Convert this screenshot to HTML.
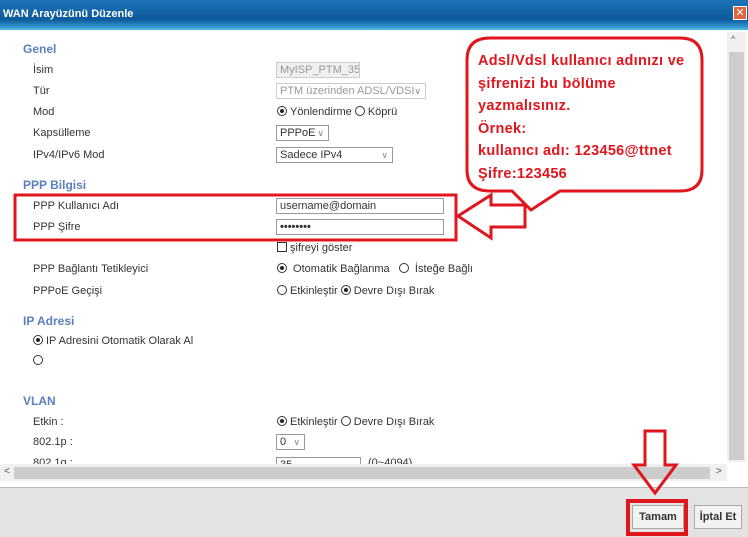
<!DOCTYPE html><html><head><meta charset="utf-8"><style>
*{margin:0;padding:0;box-sizing:border-box}
body{width:748px;height:537px;position:relative;overflow:hidden;background:#fff;font-family:"Liberation Sans",sans-serif;font-size:11px;color:#333}
.a{position:absolute;white-space:nowrap}
.h{color:#5b7fbf;font-weight:bold;font-size:12px}
.in{position:absolute;border:1px solid #999;background:#fff;height:16px;padding:1px 3px;font-size:11px;white-space:nowrap;overflow:hidden;line-height:12px}
.rd{display:inline-block;width:10px;height:10px;border:1px solid #333;border-radius:50%;vertical-align:-1px;margin-right:3px;position:relative}
.rd.on::after{content:"";position:absolute;left:2px;top:2px;width:4px;height:4px;border-radius:50%;background:#222}
.dd{position:absolute;right:4px;top:1px;color:#888;font-size:9px}
.r{color:#e0161e}
</style></head><body>
<div class="a" style="left:0;top:0;width:748px;height:30px;background:linear-gradient(#1f73b8,#0d5a9c 70%,#3aa0d8);border-bottom:2px solid #49b3df"></div>
<div class="a" style="left:3px;top:8px;color:#fff;font-weight:bold;font-size:11px">WAN Arayüzünü Düzenle</div>
<div class="a" style="left:733px;top:6px;width:14px;height:14px;background:#e2643c;border:1px solid #fff;color:#fff;font-size:11px;line-height:12px;text-align:center">✕</div>

<div class="a h" style="left:23px;top:42px">Genel</div>
<div class="a" style="left:33px;top:64px">İsim</div>
<div class="a" style="left:33px;top:85px">Tür</div>
<div class="a" style="left:33px;top:106px">Mod</div>
<div class="a" style="left:33px;top:127px">Kapsülleme</div>
<div class="a" style="left:33px;top:149px">IPv4/IPv6 Mod</div>
<div class="in" style="left:276px;top:62px;width:84px;background:#f0f0f0;border-color:#ccc;color:#999">MyISP_PTM_35</div>
<div class="in" style="left:276px;top:83px;width:150px;border-color:#ccc;color:#999">PTM üzerinden ADSL/VDSL<span class="dd" style="background:#fff">∨</span></div>
<div class="a" style="left:277px;top:106px"><span class="rd on"></span>Yönlendirme <span class="rd"></span>Köprü</div>
<div class="in" style="left:276px;top:125px;width:53px">PPPoE <span class="dd">∨</span></div>
<div class="in" style="left:276px;top:147px;width:117px">Sadece IPv4<span class="dd">∨</span></div>

<div class="a h" style="left:23px;top:178px">PPP Bilgisi</div>
<div class="a" style="left:33px;top:200px">PPP Kullanıcı Adı</div>
<div class="a" style="left:33px;top:221px">PPP Şifre</div>
<div class="in" style="left:276px;top:198px;width:168px">username@domain</div>
<div class="in" style="left:276px;top:219px;width:168px;font-weight:bold">••••••••</div>
<div class="a" style="left:277px;top:242px"><span style="display:inline-block;width:10px;height:10px;border:1px solid #333;vertical-align:-1px"></span> şifreyi göster</div>
<div class="a" style="left:33px;top:263px">PPP Bağlantı Tetikleyici</div>
<div class="a" style="left:277px;top:263px"><span class="rd on"></span> Otomatik Bağlanma &nbsp; <span class="rd"></span> İsteğe Bağlı</div>
<div class="a" style="left:33px;top:285px">PPPoE Geçişi</div>
<div class="a" style="left:277px;top:285px"><span class="rd"></span>Etkinleştir <span class="rd on"></span>Devre Dışı Bırak</div>

<div class="a h" style="left:23px;top:314px">IP Adresi</div>
<div class="a" style="left:33px;top:335px"><span class="rd on"></span>IP Adresini Otomatik Olarak Al</div>
<div class="a" style="left:33px;top:355px"><span class="rd"></span></div>
<div class="a h" style="left:23px;top:394px">VLAN</div>
<div class="a" style="left:33px;top:416px">Etkin :</div>
<div class="a" style="left:277px;top:416px"><span class="rd on"></span>Etkinleştir <span class="rd"></span>Devre Dışı Bırak</div>
<div class="a" style="left:33px;top:436px">802.1p :</div>
<div class="in" style="left:276px;top:434px;width:29px">0 <span class="dd">∨</span></div>
<div class="a" style="left:33px;top:457px">802.1q :</div>
<div class="in" style="left:276px;top:457px;width:85px">35</div>
<div class="a" style="left:368px;top:457px">(0~4094)</div>

<div class="a" style="left:727px;top:32px;width:19px;height:430px;background:#f0f0f0"></div>
<div class="a" style="left:729px;top:52px;width:15px;height:408px;background:#cdcdcd"></div>
<div class="a" style="left:731px;top:34px;font-size:9px;color:#555">^</div>
<div class="a" style="left:0;top:464px;width:727px;height:17px;background:#f0f0f0"></div>
<div class="a" style="left:14px;top:467px;width:696px;height:12px;background:#cdcdcd"></div>
<div class="a" style="left:4px;top:466px;font-size:10px;color:#555">&lt;</div>
<div class="a" style="left:716px;top:466px;font-size:10px;color:#555">&gt;</div>
<div class="a" style="left:0;top:487px;width:748px;height:50px;background:#e3e3e3;border-top:1px solid #bbb"></div>
<div class="a" style="left:632px;top:505px;width:52px;height:24px;background:#f2f2f2;border:1px solid #aaa;font-weight:bold;font-size:11px;line-height:22px;text-align:center">Tamam</div>
<div class="a" style="left:694px;top:505px;width:48px;height:24px;background:#f2f2f2;border:1px solid #aaa;font-weight:bold;font-size:11px;line-height:22px;text-align:center">İptal Et</div>

<svg class="a" style="left:0;top:0" width="748" height="537">
<g fill="none" stroke="#e0161e" stroke-width="3">
<rect x="15" y="195" width="441" height="45"/>
<path d="M490 38 H680 Q702 38 702 60 V170 Q702 191 680 191 H560 L531 210 L512 191 H490 Q467 191 467 170 V60 Q467 38 490 38 Z"/>
<path d="M458 216 L491 195 V205 H525 V227 H491 V238 Z"/>
<path d="M645 431 H665 V465 H676 L655 493 L634 465 H645 Z"/>
<rect x="628" y="501" width="58" height="33" stroke-width="4"/>
</g>
</svg>
<div class="a r" style="left:478px;top:50px;font-weight:bold;font-size:14.5px;line-height:22.5px;letter-spacing:0.3px">Adsl/Vdsl kullanıcı adınızı ve<br>şifrenizi bu bölüme<br>yazmalısınız.<br>Örnek:<br>kullanıcı adı: 123456@ttnet<br>Şifre:123456</div>
</body></html>
